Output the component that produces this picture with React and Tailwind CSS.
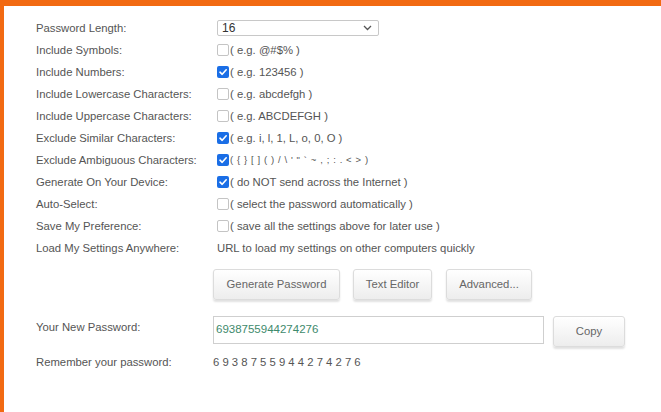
import React from "react";

const rows = [
  { label: "Include Symbols:", checked: false, text: "( e.g. @#$% )" },
  { label: "Include Numbers:", checked: true, text: "( e.g. 123456 )" },
  { label: "Include Lowercase Characters:", checked: false, text: "( e.g. abcdefgh )" },
  { label: "Include Uppercase Characters:", checked: false, text: "( e.g. ABCDEFGH )" },
  { label: "Exclude Similar Characters:", checked: true, text: "( e.g. i, l, 1, L, o, 0, O )" },
  { label: "Exclude Ambiguous Characters:", checked: true, text: "( { } [ ] ( ) / \\ ' \" ` ~ , ; : . < > )", small: true },
  { label: "Generate On Your Device:", checked: true, text: "( do NOT send across the Internet )" },
  { label: "Auto-Select:", checked: false, text: "( select the password automatically )" },
  { label: "Save My Preference:", checked: false, text: "( save all the settings above for later use )" },
];

function Box({ checked }) {
  if (checked) {
    return (
      <span className="w-[12px] h-[12px] rounded-[2px] bg-[#1a6ee6] flex items-center justify-center shrink-0">
        <svg width="10" height="10" viewBox="0 0 10 10">
          <path d="M2 5.2 L4.2 7.3 L8.2 2.8" fill="none" stroke="white" strokeWidth="1.6" strokeLinecap="round" strokeLinejoin="round" />
        </svg>
      </span>
    );
  }
  return <span className="w-[12px] h-[12px] rounded-[2px] border border-[#c4c4c4] bg-white shrink-0" />;
}

const btn =
  "h-[31px] flex items-center justify-center rounded-[3px] border border-[#dcdcdc] bg-gradient-to-b from-white to-[#ededed] shadow-[0_2px_2px_rgba(0,0,0,0.12)] text-[#666] text-[11.3px]";

export default function App() {
  return (
    <div
      className="w-[661px] h-[412px] bg-white border-t-[6px] border-l-[4px] border-[#f26a12] overflow-hidden text-[#555] text-[11.3px]"
      style={{ fontFamily: '"Liberation Sans", Arial, sans-serif' }}
    >
      <div className="pl-[32px] pt-[11px] flex flex-col">
        <div className="flex items-center h-[22px]">
          <div className="w-[181px]">Password Length:</div>
          <div className="w-[162px] h-[16px] border border-[#c8c8c8] rounded-[2px] flex items-center justify-between pl-[4px] pr-[6px] text-[#333] text-[12px]">
            <span>16</span>
            <svg width="9" height="6" viewBox="0 0 9 6">
              <path d="M1 1 L4.5 4.5 L8 1" fill="none" stroke="#555" strokeWidth="1.3" />
            </svg>
          </div>
        </div>
        {rows.map((r, i) => (
          <div key={i} className="flex items-center h-[22px]">
            <div className="w-[181px]">{r.label}</div>
            <div className="flex items-center gap-[1px]">
              <Box checked={r.checked} />
              <span className={r.small ? "text-[9.5px] tracking-[0.6px]" : ""}>{r.text}</span>
            </div>
          </div>
        ))}
        <div className="flex items-center h-[22px]">
          <div className="w-[181px]">Load My Settings Anywhere:</div>
          <div>URL to load my settings on other computers quickly</div>
        </div>

        <div className="flex pl-[177px] mt-[10px] gap-[13px]">
          <div className={btn + " w-[127px]"}>Generate Password</div>
          <div className={btn + " w-[79px]"}>Text Editor</div>
          <div className={btn + " w-[86px] ml-[1px]"}>Advanced...</div>
        </div>

        <div className="flex items-start mt-[16px]">
          <div className="w-[177px] pt-[3px]">Your New Password:</div>
          <div className="w-[331px] h-[28px] border border-[#cfcfcf] flex items-center pl-[2px] text-[#3e8a6c] text-[11.5px]">
            6938755944274276
          </div>
          <div className={btn + " w-[72px] h-[27px] ml-[9px]"}>Copy</div>
        </div>

        <div className="flex items-center mt-[6px] h-[18px]">
          <div className="w-[177px]">Remember your password:</div>
          <div>6 9 3 8 7 5 5 9 4 4 2 7 4 2 7 6</div>
        </div>
      </div>
    </div>
  );
}
